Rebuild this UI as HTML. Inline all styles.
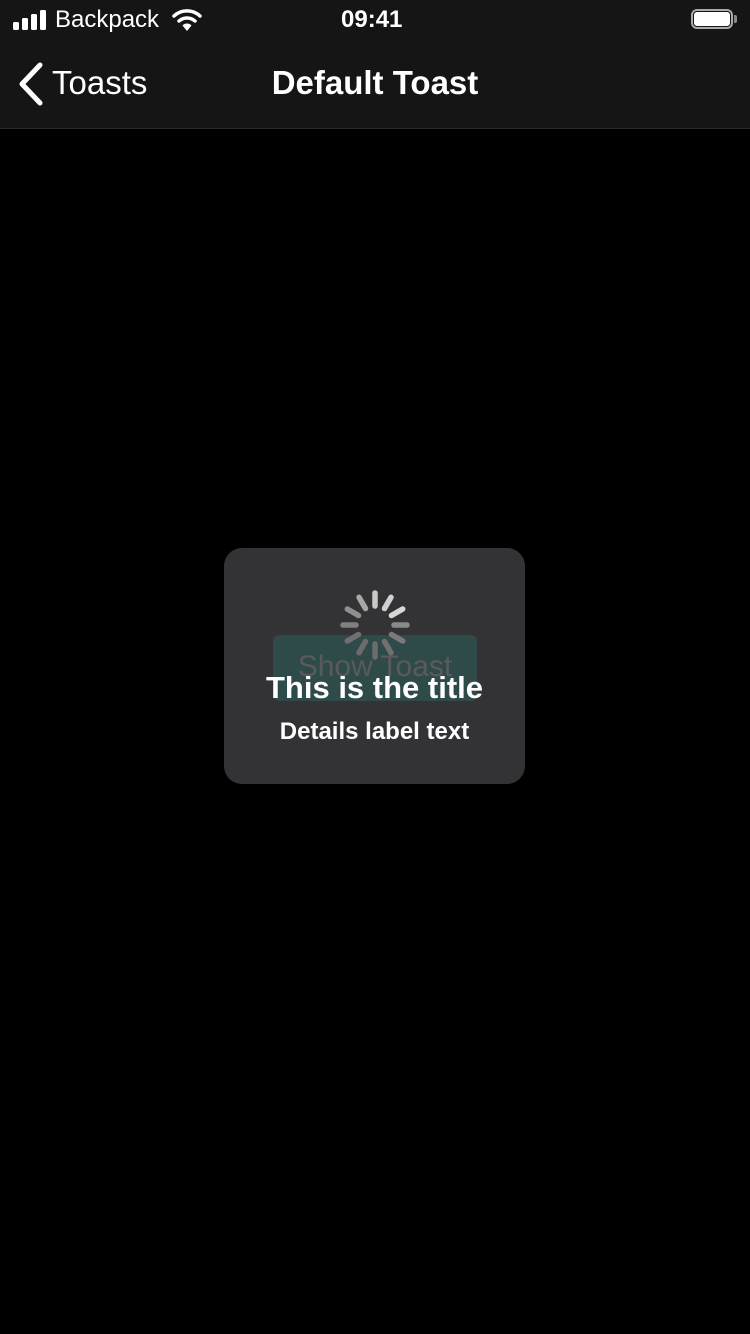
<!DOCTYPE html>
<html><head><meta charset="utf-8"><style>
body{margin:0;width:750px;height:1334px;background:#000;position:relative;overflow:hidden;font-family:"Liberation Sans",sans-serif;color:#fff}
.nav{position:absolute;left:0;top:0;width:750px;height:128px;background:#151515;border-bottom:1px solid #2a2a2a}
.abs{position:absolute;white-space:nowrap}
.toast{position:absolute;left:224px;top:548px;width:301px;height:236px;background:#333335;border-radius:18px;overflow:hidden}
</style></head><body>
<div class="nav">
  <svg class="abs" style="left:13px;top:10px" width="34" height="20"><rect x="0" y="12" width="6" height="8" rx="1.5" fill="#fff"/><rect x="9" y="8" width="6" height="12" rx="1.5" fill="#fff"/><rect x="18" y="4" width="6" height="16" rx="1.5" fill="#fff"/><rect x="27" y="0" width="6" height="20" rx="1.5" fill="#fff"/></svg>
  <div class="abs" style="left:55px;top:6px;font-size:24px">Backpack</div>
  <svg class="abs" style="left:172px;top:8px" width="30" height="24" viewBox="0 0 30 24"><path d="M2 8 A19 19 0 0 1 28 8" stroke="#fff" stroke-width="3.5" fill="none" stroke-linecap="round"/><path d="M7 13 A12 12 0 0 1 23 13" stroke="#fff" stroke-width="3.5" fill="none" stroke-linecap="round"/><path d="M10.5 17.5 L15 23 L19.5 17.5 A6 6 0 0 0 10.5 17.5Z" fill="#fff"/></svg>
  <div class="abs" style="left:341px;top:6px;font-size:24px;font-weight:bold">09:41</div>
  <div class="abs" style="left:691px;top:9px;width:42px;height:20px;border:2px solid #aaa;border-radius:6px;box-sizing:border-box"></div>
  <div class="abs" style="left:694px;top:12px;width:36px;height:14px;background:#fff;border-radius:3px"></div>
  <div class="abs" style="left:734px;top:15px;width:3px;height:8px;background:#888;border-radius:0 2px 2px 0"></div>
  <svg class="abs" style="left:16px;top:62px" width="28" height="44"><path d="M24 3 L6 22 L24 41" stroke="#fff" stroke-width="5" fill="none" stroke-linecap="round" stroke-linejoin="round"/></svg>
  <div class="abs" style="left:52px;top:64px;font-size:33px">Toasts</div>
  <div class="abs" style="left:0;width:750px;text-align:center;top:64px;font-size:33px;font-weight:bold">Default Toast</div>
</div>
<div class="toast">
  <div class="abs" style="left:49px;top:87px;width:204px;height:66px;background:#2f4b49;border-radius:6px"></div>
  <div class="abs" style="left:49px;top:102px;width:204px;text-align:center;font-size:30px;color:#5a5a5c">Show Toast</div>
  <svg class="abs" style="left:111px;top:37px" width="80" height="80" viewBox="-40 -40 80 80">
    <g stroke-linecap="round" stroke-width="5.5">
      <line x1="0" y1="-19" x2="0" y2="-32" stroke="#c8c8c8" transform="rotate(0)"/>
      <line x1="0" y1="-19" x2="0" y2="-32" stroke="#d0d0d0" transform="rotate(30)"/>
      <line x1="0" y1="-19" x2="0" y2="-32" stroke="#d8d8d8" transform="rotate(60)"/>
      <line x1="0" y1="-19" x2="0" y2="-32" stroke="#8a8a8a" transform="rotate(90)"/>
      <line x1="0" y1="-19" x2="0" y2="-32" stroke="#7a7a7a" transform="rotate(120)"/>
      <line x1="0" y1="-19" x2="0" y2="-32" stroke="#707070" transform="rotate(150)"/>
      <line x1="0" y1="-19" x2="0" y2="-32" stroke="#6c6c6c" transform="rotate(180)"/>
      <line x1="0" y1="-19" x2="0" y2="-32" stroke="#6c6c6c" transform="rotate(210)"/>
      <line x1="0" y1="-19" x2="0" y2="-32" stroke="#707070" transform="rotate(240)"/>
      <line x1="0" y1="-19" x2="0" y2="-32" stroke="#808080" transform="rotate(270)"/>
      <line x1="0" y1="-19" x2="0" y2="-32" stroke="#909090" transform="rotate(300)"/>
      <line x1="0" y1="-19" x2="0" y2="-32" stroke="#a8a8a8" transform="rotate(330)"/>
    </g>
  </svg>
  <div class="abs" style="left:0;width:301px;text-align:center;top:122px;font-size:31px;font-weight:bold">This is the title</div>
  <div class="abs" style="left:0;width:301px;text-align:center;top:170px;font-size:24px;font-weight:bold">Details label text</div>
</div>
</body></html>
